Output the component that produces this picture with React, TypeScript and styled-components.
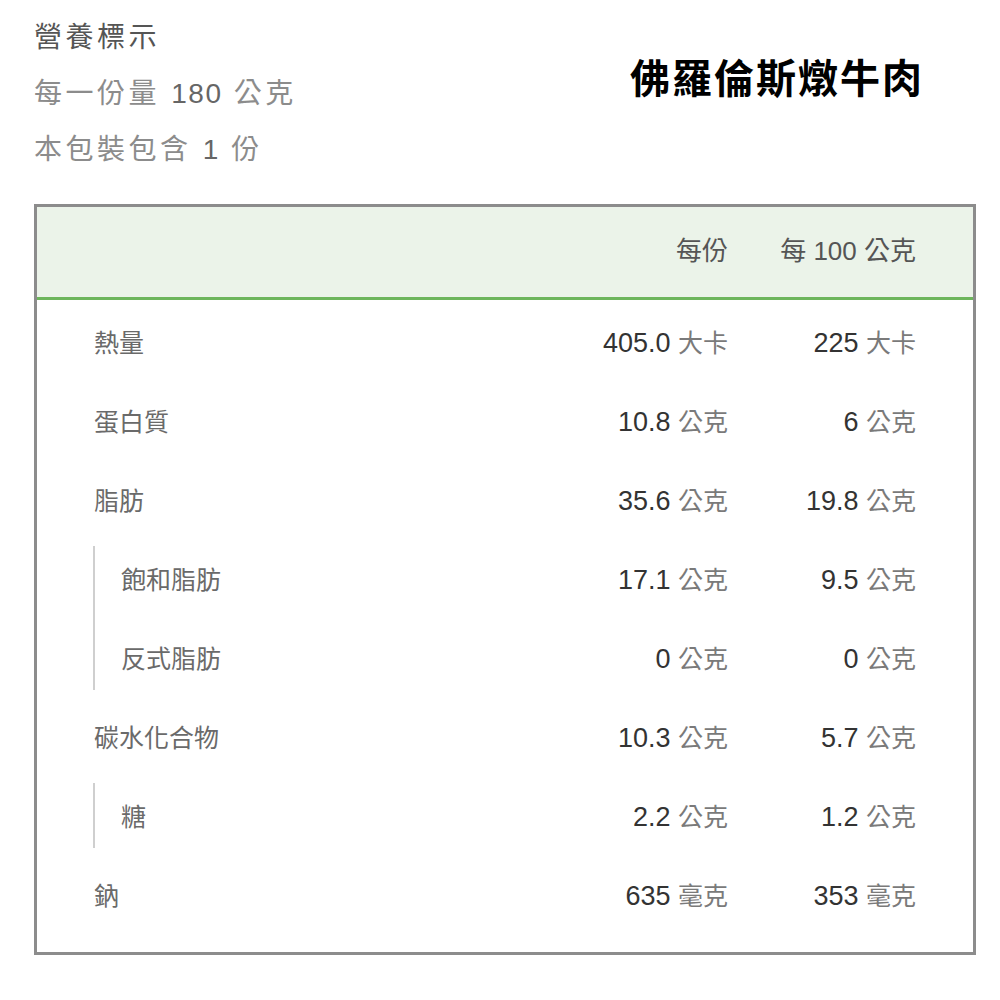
import React from "react";
import styled, { createGlobalStyle } from "styled-components";

const Global = createGlobalStyle`
  html, body { margin: 0; padding: 0; background: #fff; }
  body { font-family: "Liberation Sans", "Noto Sans CJK TC", sans-serif; }
`;

const Page = styled.div`
  width: 1000px;
  padding: 10px 24px 0 34px;
  box-sizing: border-box;
`;

const Top = styled.div`
  display: flex;
  justify-content: space-between;
  align-items: flex-start;
`;

const Info = styled.div`
  display: flex;
  flex-direction: column;
`;

const InfoLine = styled.div<{ $strong?: boolean }>`
  font-size: 28px;
  line-height: 56px;
  letter-spacing: 3.5px;
  color: ${(p) => (p.$strong ? "#555" : "#8c8c8c")};
  white-space: nowrap;
`;

const Num = styled.span`
  color: #666;
  letter-spacing: 1.5px;
`;

const Title = styled.h1`
  margin: 42px 52px 0 0;
  font-size: 40px;
  line-height: 48px;
  font-weight: 700;
  letter-spacing: 2px;
  color: #000;
  font-family: "Noto Sans CJK TC", sans-serif;
`;

const Table = styled.div`
  margin-top: 26px;
  width: 942px;
  box-sizing: border-box;
  border: 3px solid #8c8c8c;
`;

const Grid = styled.div`
  display: grid;
  grid-template-columns: 1fr 200px 188px;
  padding: 0 57px;
  align-items: center;
`;

const Header = styled(Grid)`
  height: 93px;
  box-sizing: border-box;
  padding-bottom: 8px;
  background: #ebf3e9;
  border-bottom: 3px solid #6db55c;
  font-size: 26px;
`;

const Body = styled.div`
  padding: 1px 0 19px;
`;

const Row = styled(Grid)`
  height: 79px;
  font-size: 27px;
`;

const Label = styled.div<{ $sub?: boolean }>`
  color: #6a6a6a;
  font-size: 25px;
  padding-left: ${(p) => (p.$sub ? "27px" : "0")};
`;

const Cell = styled.div<{ $head?: boolean }>`
  text-align: right;
  white-space: nowrap;
  color: ${(p) => (p.$head ? "#555" : "#333")};
`;

const Unit = styled.span`
  color: #7a7a7a;
  font-size: 25px;
`;

const SubGroup = styled.div`
  position: relative;
  &::before {
    content: "";
    position: absolute;
    left: 56px;
    top: 8px;
    bottom: 6px;
    width: 2px;
    background: #cfcfcf;
  }
`;

type Item = { label: string; a: string; au: string; b: string; bu: string };

const V = ({ n, u }: { n: string; u: string }) => (
  <Cell>
    {n} <Unit>{u}</Unit>
  </Cell>
);

const R = ({ it, sub }: { it: Item; sub?: boolean }) => (
  <Row>
    <Label $sub={sub}>{it.label}</Label>
    <V n={it.a} u={it.au} />
    <V n={it.b} u={it.bu} />
  </Row>
);

const g = "公克";

export default function App() {
  return (
    <>
      <Global />
      <Page>
        <Top>
          <Info>
            <InfoLine $strong>營養標示</InfoLine>
            <InfoLine>
              每一份量 <Num>180</Num> 公克
            </InfoLine>
            <InfoLine>
              本包裝包含 <Num>1</Num> 份
            </InfoLine>
          </Info>
          <Title>佛羅倫斯燉牛肉</Title>
        </Top>
        <Table>
          <Header>
            <div />
            <Cell $head>每份</Cell>
            <Cell $head>每 100 公克</Cell>
          </Header>
          <Body>
            <R it={{ label: "熱量", a: "405.0", au: "大卡", b: "225", bu: "大卡" }} />
            <R it={{ label: "蛋白質", a: "10.8", au: g, b: "6", bu: g }} />
            <R it={{ label: "脂肪", a: "35.6", au: g, b: "19.8", bu: g }} />
            <SubGroup>
              <R sub it={{ label: "飽和脂肪", a: "17.1", au: g, b: "9.5", bu: g }} />
              <R sub it={{ label: "反式脂肪", a: "0", au: g, b: "0", bu: g }} />
            </SubGroup>
            <R it={{ label: "碳水化合物", a: "10.3", au: g, b: "5.7", bu: g }} />
            <SubGroup>
              <R sub it={{ label: "糖", a: "2.2", au: g, b: "1.2", bu: g }} />
            </SubGroup>
            <R it={{ label: "鈉", a: "635", au: "毫克", b: "353", bu: "毫克" }} />
          </Body>
        </Table>
      </Page>
    </>
  );
}
